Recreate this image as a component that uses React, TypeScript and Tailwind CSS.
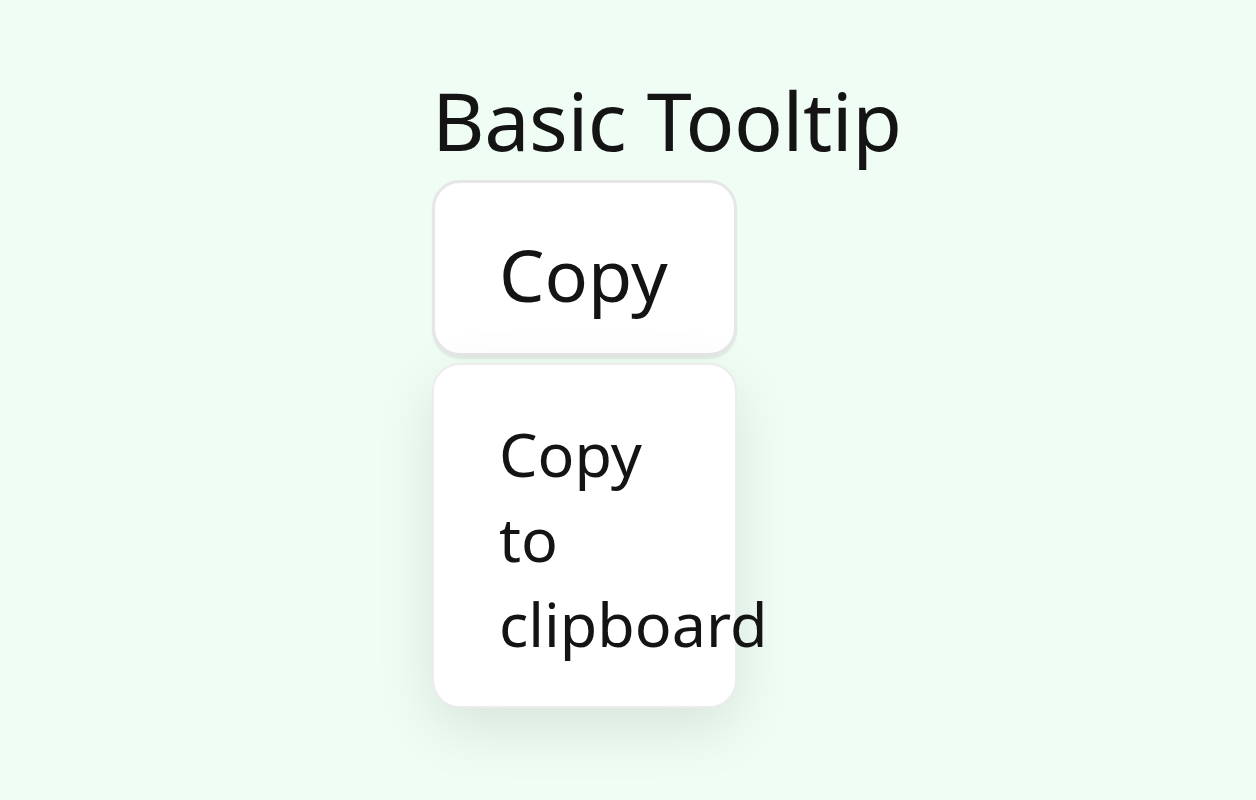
export default function App() {
    return (
        <div className="min-h-screen w-full bg-[#effdf4] text-[#141414] font-['Noto_Sans',sans-serif]">
            <div className="flex flex-col items-start pl-[432px] pt-[72px]">
                <h2 className="text-[81px] leading-[96px] font-normal tracking-[-0.5px]">Basic Tooltip</h2>
                <div className="flex flex-col mt-[12px]">
                    <button className="w-[305px] h-[176px] bg-white rounded-[28px] border-[3px] border-[#e6e6e6] shadow-[0_3px_2px_rgba(0,0,0,0.07)] text-left pl-[64px] pt-[12px] text-[72px] leading-[90px]">
                        Copy
                    </button>
                    <div className="mt-[7px] w-[305px] h-[345px] bg-white rounded-[28px] border-[2px] border-[#ececec] shadow-[0_20px_60px_rgba(0,0,0,0.1)] pl-[65px] pt-[46px] text-[61px] leading-[85px]">
                        <div className="w-[140px]">Copy to clipboard</div>
                    </div>
                </div>
            </div>
        </div>
    );
}
